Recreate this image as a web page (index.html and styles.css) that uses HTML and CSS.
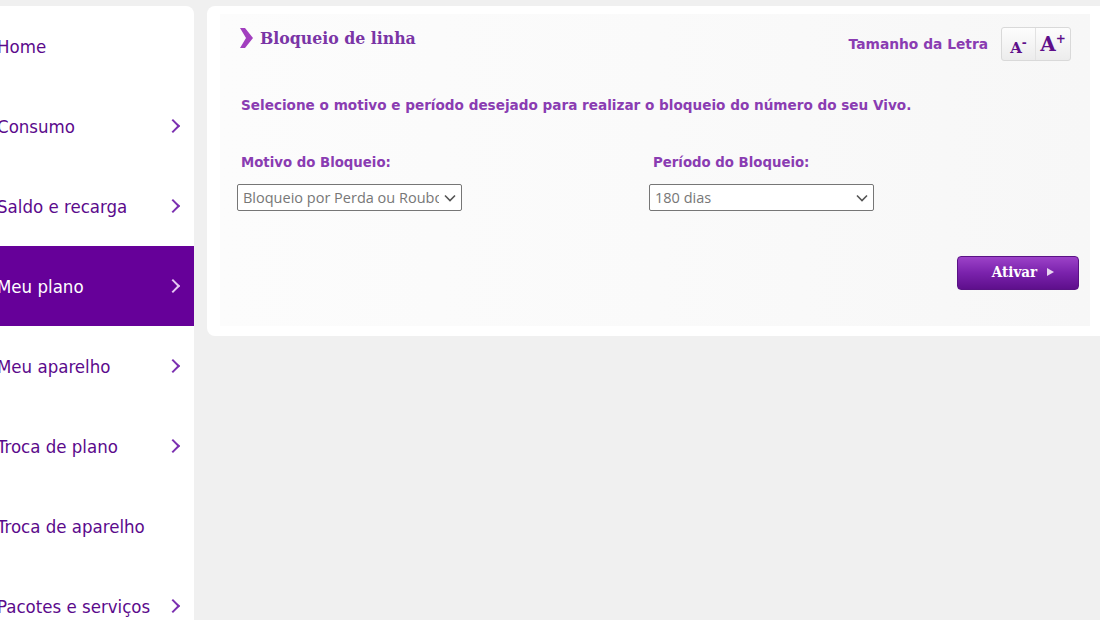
FILE: index.html
```html
<!DOCTYPE html>
<html lang="pt-BR">
<head>
  <meta charset="UTF-8">
  <title>Bloqueio de linha</title>
  <link rel="stylesheet" href="styles.css">
</head>
<body>
  <div class="page">
    <nav class="sidebar">
      <a class="menu-item" href="#">Home</a>
      <a class="menu-item" href="#">Consumo <span class="chev"></span></a>
      <a class="menu-item" href="#">Saldo e recarga <span class="chev"></span></a>
      <a class="menu-item active" href="#">Meu plano <span class="chev"></span></a>
      <a class="menu-item" href="#">Meu aparelho <span class="chev"></span></a>
      <a class="menu-item" href="#">Troca de plano <span class="chev"></span></a>
      <a class="menu-item" href="#">Troca de aparelho</a>
      <a class="menu-item" href="#">Pacotes e serviços <span class="chev"></span></a>
    </nav>

    <main class="panel">
      <div class="box">
        <div class="box-head">
          <h1 class="title">
            <svg width="13" height="20" viewBox="0 0 13 20"><path d="M0 0h5l8 10-8 10H0l6-10z" fill="#a23fbf"/></svg>
            Bloqueio de linha
          </h1>
          <div class="font-size">
            <span>Tamanho da Letra</span>
            <div class="font-btns">
              <button class="fbtn small">A<sup>-</sup></button>
              <button class="fbtn big">A<sup>+</sup></button>
            </div>
          </div>
        </div>

        <p class="intro">Selecione o motivo e período desejado para realizar o bloqueio do número do seu Vivo.</p>

        <div class="fields">
          <div class="field">
            <label>Motivo do Bloqueio:</label>
            <select><option>Bloqueio por Perda ou Roubo</option></select>
          </div>
          <div class="field">
            <label>Período do Bloqueio:</label>
            <select><option>180 dias</option></select>
          </div>
        </div>

        <div class="actions">
          <button class="btn-ativar">Ativar <span class="tri"></span></button>
        </div>
      </div>
    </main>
  </div>
</body>
</html>
```

FILE: styles.css
```css
body {
  margin: 0;
  background-color: #f0f0f0;
  font-family: "DejaVu Sans", Verdana, sans-serif;
  overflow: hidden;
}

.page {
  display: flex;
  align-items: flex-start;
  gap: 13px;
  padding-top: 6px;
}

.sidebar {
  background-color: #fff;
  width: 214px;
  margin-left: -20px;
  border-radius: 0 8px 0 0;
  display: flex;
  flex-direction: column;
  flex-shrink: 0;
}

.menu-item {
  height: 80px;
  display: flex;
  align-items: center;
  justify-content: space-between;
  padding: 0 12px 0 17px;
  text-decoration: none;
  color: #5b0a8c;
  font-family: "DejaVu Sans Condensed", "DejaVu Sans", sans-serif;
  font-stretch: condensed;
  font-size: 18.5px;
}

.menu-item.active {
  background-color: #660099;
  color: #fff;
}

.chev {
  width: 8px;
  height: 8px;
  border-top: 2.5px solid #7b2fb0;
  border-right: 2.5px solid #7b2fb0;
  transform: rotate(45deg);
  margin-right: 4px;
}

.menu-item.active .chev {
  border-color: #e6c8f2;
}

.panel {
  flex: 1;
  background-color: #fff;
  border-radius: 8px;
  margin-right: -8px;
  padding: 8px 13px 10px 13px;
}

.box {
  background: linear-gradient(to right, #fcfcfc, #fafafa 50%, #f7f7f7);
  margin-right: 5px;
  height: 312px;
  box-sizing: border-box;
  padding: 12px 11px 0 20px;
}

.box-head {
  display: flex;
  justify-content: space-between;
  align-items: flex-start;
}

.title {
  margin: 2px 0 0 0;
  display: flex;
  align-items: center;
  gap: 7px;
  font-family: "DejaVu Serif Condensed", "DejaVu Serif", serif;
  font-stretch: condensed;
  font-size: 17.5px;
  color: #7a35a6;
}

.font-size {
  display: flex;
  align-items: center;
  gap: 13px;
  font-size: 13.8px;
  font-weight: bold;
  color: #8a3cb2;
  margin-top: 1px;
  margin-right: 8px;
}

.font-btns {
  display: flex;
  border: 1px solid #d9d9d9;
  border-radius: 3px;
  background: linear-gradient(#fdfdfd, #ececec);
}

.fbtn {
  width: 34px;
  height: 32px;
  border: none;
  background: none;
  font-family: "DejaVu Serif", serif;
  font-weight: bold;
  color: #5e0f8a;
  padding: 0;
}

.fbtn.small {
  font-size: 15px;
  border-right: 1px solid #e2e2e2;
  padding-top: 4px;
}

.fbtn.big {
  font-size: 20px;
}

.fbtn sup {
  font-size: 12px;
}

.intro {
  margin: 36px 0 0 1px;
  font-size: 13.6px;
  font-weight: bold;
  color: #8a3cb2;
}

.fields {
  display: flex;
  margin-top: 42px;
}

.field {
  width: 412px;
  display: flex;
  flex-direction: column;
}

.field label {
  font-size: 13.3px;
  font-weight: bold;
  color: #8a3cb2;
  margin-left: 1px;
  margin-bottom: 14px;
}

.field select {
  appearance: none;
  width: 225px;
  height: 27px;
  margin-left: -3px;
  border: 1px solid #767676;
  border-radius: 2px;
  background-color: #fff;
  background-image: url("data:image/svg+xml;utf8,<svg xmlns='http://www.w3.org/2000/svg' width='12' height='8' viewBox='0 0 12 8'><path d='M1 1.5l5 5 5-5' fill='none' stroke='%23555' stroke-width='1.6'/></svg>");
  background-repeat: no-repeat;
  background-position: right 5px center;
  color: #777;
  font-family: "Open Sans", sans-serif;
  font-size: 14.5px;
  padding: 0 22px 0 5px;
}

.actions {
  display: flex;
  justify-content: flex-end;
  margin-top: 45px;
}

.btn-ativar {
  width: 122px;
  height: 34px;
  border: 1px solid #5a1285;
  border-radius: 4px;
  background: linear-gradient(#9c42c8, #7a22ac 50%, #5e0f8c);
  color: #fff;
  font-family: "DejaVu Serif Condensed", "DejaVu Serif", serif;
  font-stretch: condensed;
  font-weight: bold;
  font-size: 15px;
  display: flex;
  align-items: center;
  justify-content: center;
  gap: 10px;
  padding: 0 0 2px 10px;
}

.tri {
  width: 0;
  height: 0;
  border-top: 4px solid transparent;
  border-bottom: 4px solid transparent;
  border-left: 7px solid #e8d6f0;
}
```
